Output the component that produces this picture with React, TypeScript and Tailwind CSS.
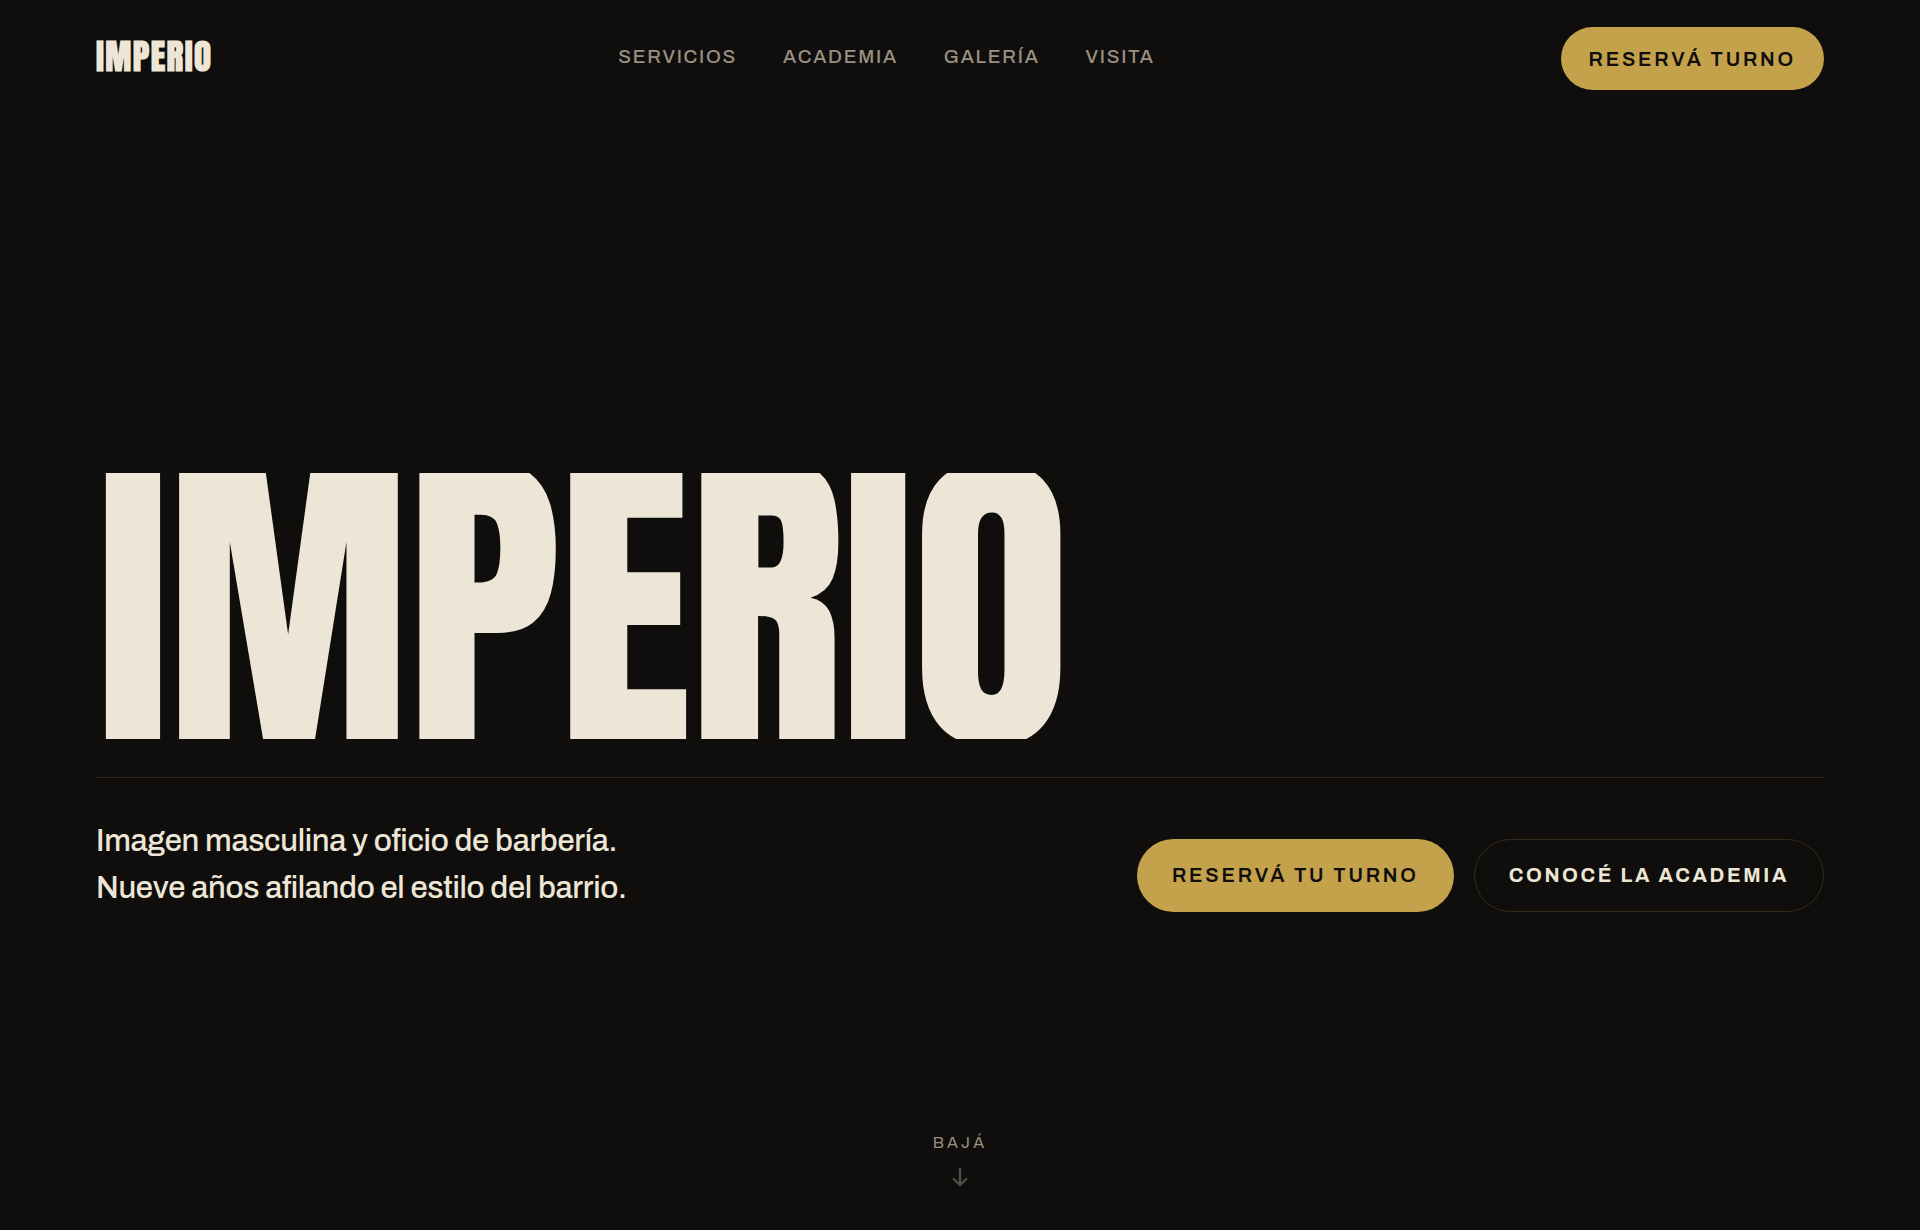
const links = [
  { label: 'Servicios', href: '#servicios' },
  { label: 'Academia', href: '#academia' },
  { label: 'Galería', href: '#galeria' },
  { label: 'Visita', href: '#visita' },
];

function Header() {
  return (
    <header className="flex items-center justify-between px-[5vw] py-[27px]">
      <a href="#inicio" className="pb-1 font-[Anton,'Roboto_Condensed',sans-serif] text-[35px] leading-none font-bold tracking-[0.04em] text-[#ede6d6]">
        IMPERIO
      </a>
      <nav className="flex items-center gap-[46px] pb-1" aria-label="Principal">
        {links.map((link) => (
          <a key={link.href} href={link.href} className="text-[19px] leading-7 font-medium tracking-[0.09em] text-[#9a9080] uppercase">
            {link.label}
          </a>
        ))}
      </nav>
      <button type="button" className="h-[63px] rounded-full bg-[#c4a24b] px-7 text-[20px] font-semibold tracking-[0.14em] text-[#0f0e0c] uppercase">
        Reservá turno
      </button>
    </header>
  );
}

function Hero() {
  return (
    <section id="inicio" className="flex flex-1 flex-col justify-end px-[5vw]">
      <h1 className="overflow-hidden font-[Anton,'Roboto_Condensed',sans-serif] text-[17vw] leading-[0.815] font-normal tracking-[-0.01em] text-[#ede6d6]">
        IMPERIO
      </h1>
      <div className="mt-[38px] flex flex-wrap items-end justify-between gap-8 border-t border-[#33281f] pt-10">
        <p className="text-[31px] leading-[47px] font-medium tracking-[-0.01em] text-[#ede6d6]">
          Imagen masculina y oficio de barbería.
          <br />
          Nueve años afilando el estilo del barrio.
        </p>
        <div className="flex flex-wrap gap-5">
          <button type="button" className="h-[73px] rounded-full bg-[#c4a24b] px-[35px] pb-0.5 text-[20px] font-semibold tracking-[0.14em] text-[#0f0e0c] uppercase">
            Reservá tu turno
          </button>
          <button type="button" className="h-[73px] rounded-full border border-[#352d1c] px-[34px] pb-0.5 text-[20px] font-bold tracking-[0.13em] text-[#ede6d6] uppercase">
            Conocé la academia
          </button>
        </div>
      </div>
    </section>
  );
}

export default function App() {
  return (
    <main className="flex min-h-screen flex-col bg-[#0f0e0c] font-[Archivo,'Liberation_Sans',sans-serif]">
      <Header />
      <Hero />
      <a href="#servicios" className="mx-auto mt-[219px] mb-[43px] flex flex-col items-center gap-3 text-[16px] leading-6 tracking-[0.2em] text-[#9a9080] uppercase">
        Bajá
        <svg className="h-5 w-4 text-[#524e48]" viewBox="0 0 16 20" fill="none" stroke="currentColor" strokeWidth="2.3" strokeLinecap="round" aria-hidden="true">
          <path d="M8 2v16M1.7 12 8 18l6.3-6" />
        </svg>
      </a>
    </main>
  );
}
